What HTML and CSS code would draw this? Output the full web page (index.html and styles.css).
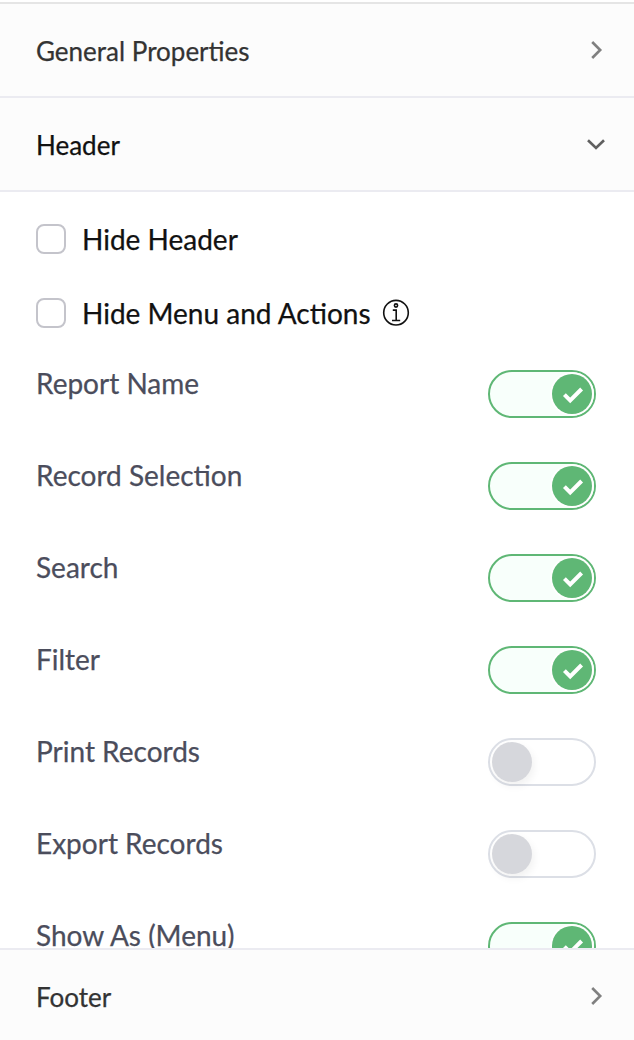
FILE: index.html
```
<!DOCTYPE html>
<html lang="en">
<head>
    <meta charset="UTF-8">
    <meta name="viewport" content="width=device-width, initial-scale=1.0">
    <title>Report Properties</title>
    <link rel="stylesheet" href="styles.css">
</head>
<body>
    <div class="panel">
        <div class="section-title">
            <span>General Properties</span>
            <svg class="chevron" viewBox="0 0 20 20"><path d="M6.2 2l8 8-8 8"/></svg>
        </div>
        <div class="section-title open">
            <span>Header</span>
            <svg class="chevron" viewBox="0 0 20 20"><path d="M2 6.2l8 7.8 8-7.8"/></svg>
        </div>

        <div class="section-body">
            <label class="check-row">
                <input type="checkbox" class="checkbox">
                <span>Hide Header</span>
            </label>
            <label class="check-row">
                <input type="checkbox" class="checkbox">
                <span>Hide Menu and Actions</span>
                <svg class="info" viewBox="0 0 28 28">
                    <circle cx="14" cy="13.7" r="12.3"/>
                    <circle cx="14" cy="6.5" r="1.6"/>
                    <path d="M10.8 11.1h3.4v10.2M10 21.5h8.2"/>
                </svg>
            </label>

            <div class="toggles" id="toggleList">
                <!-- Toggle rows will be added here -->
            </div>
        </div>

        <div class="section-title footer">
            <span>Footer</span>
            <svg class="chevron" viewBox="0 0 20 20"><path d="M6.2 2l8 8-8 8"/></svg>
        </div>
    </div>

    <script>
        const options = [
            { label: 'Report Name', on: true },
            { label: 'Record Selection', on: true },
            { label: 'Search', on: true },
            { label: 'Filter', on: true },
            { label: 'Print Records', on: false },
            { label: 'Export Records', on: false },
            { label: 'Show As (Menu)', on: true }
        ];

        const toggleList = document.getElementById('toggleList');

        options.forEach(option => {
            const row = document.createElement('div');
            row.className = 'toggle-row';
            row.innerHTML = `
                <span class="toggle-label">${option.label}</span>
                <button class="switch ${option.on ? 'on' : ''}" aria-label="${option.label}">
                    <span class="knob">
                        <svg class="tick" viewBox="0 0 40 40"><path d="M12.4 20.6l5.8 5.8 11.4-11.4"/></svg>
                    </span>
                </button>
            `;
            row.querySelector('.switch').onclick = function() { this.classList.toggle('on'); };
            toggleList.appendChild(row);
        });
    </script>
</body>
</html>
```
FILE: styles.css
```
:root {
    --green: #5fb775;
    --line: #ebebf1;
    --text: #4b4d5c;
}

* {
    box-sizing: border-box;
}

body {
    margin: 0;
    background: white;
    font-family: Lato, sans-serif;
    color: var(--text);
    -webkit-text-stroke: 0.25px currentColor;
}

.panel {
    height: 1040px;
    padding-top: 2px;
    display: flex;
    flex-direction: column;
    overflow: hidden;
}

.section-title {
    flex: none;
    height: 94px;
    padding: 0 28px 0 36px;
    display: flex;
    align-items: center;
    justify-content: space-between;
    background: #fcfcfc;
    border-bottom: 2px solid var(--line);
    color: #333;
    font-size: 26px;
    line-height: 32px;
}

.section-title span {
    padding-top: 2px;
}

.section-title:first-child {
    height: 96px;
    border-top: 2px solid #e5e5e5;
}

.section-title.open {
    color: #111;
}

.section-title.footer {
    height: 92px;
    border-top: 2px solid var(--line);
    border-bottom: none;
    padding-top: 2px;
}

.chevron {
    width: 20px;
    height: 20px;
    fill: none;
    stroke: #808080;
    stroke-width: 2.6;
}

.open .chevron {
    stroke: #606060;
}

.section-body {
    flex: 1;
    min-height: 0;
    padding: 32px 38px 0 36px;
    overflow: hidden;
}

.check-row {
    height: 30px;
    margin-bottom: 44px;
    display: flex;
    align-items: center;
    color: #111;
    font-size: 28px;
    line-height: 34px;
}

.checkbox {
    appearance: none;
    width: 30px;
    height: 30px;
    margin: 0 16px 0 0;
    border: 2px solid #c4c4cb;
    border-radius: 8px;
    background: white;
}

.info {
    width: 28px;
    height: 28px;
    margin-left: 11px;
    fill: none;
    stroke: #111;
    stroke-width: 1.6;
}

.toggles {
    margin-top: -2px;
}

.toggle-row {
    height: 48px;
    margin-bottom: 44px;
    display: flex;
    justify-content: space-between;
    align-items: flex-start;
}

.toggle-label {
    font-size: 28px;
    line-height: 27px;
}

.switch {
    width: 108px;
    height: 48px;
    padding: 2px;
    display: flex;
    border: 2px solid #dcdfe6;
    border-radius: 24px;
    background: white;
    cursor: pointer;
}

.knob {
    width: 40px;
    height: 40px;
    border-radius: 50%;
    background: #d6d7dc;
    box-shadow: 2px 4px 8px rgba(0,0,0,0.06);
}

.tick {
    display: none;
    width: 40px;
    height: 40px;
    fill: none;
    stroke: white;
    stroke-width: 4;
}

.switch.on {
    justify-content: flex-end;
    border-color: var(--green);
    background: #f8fffb;
}

.switch.on .knob {
    background: var(--green);
    box-shadow: 0 0 0 2px white;
}

.switch.on .tick {
    display: block;
}
```
